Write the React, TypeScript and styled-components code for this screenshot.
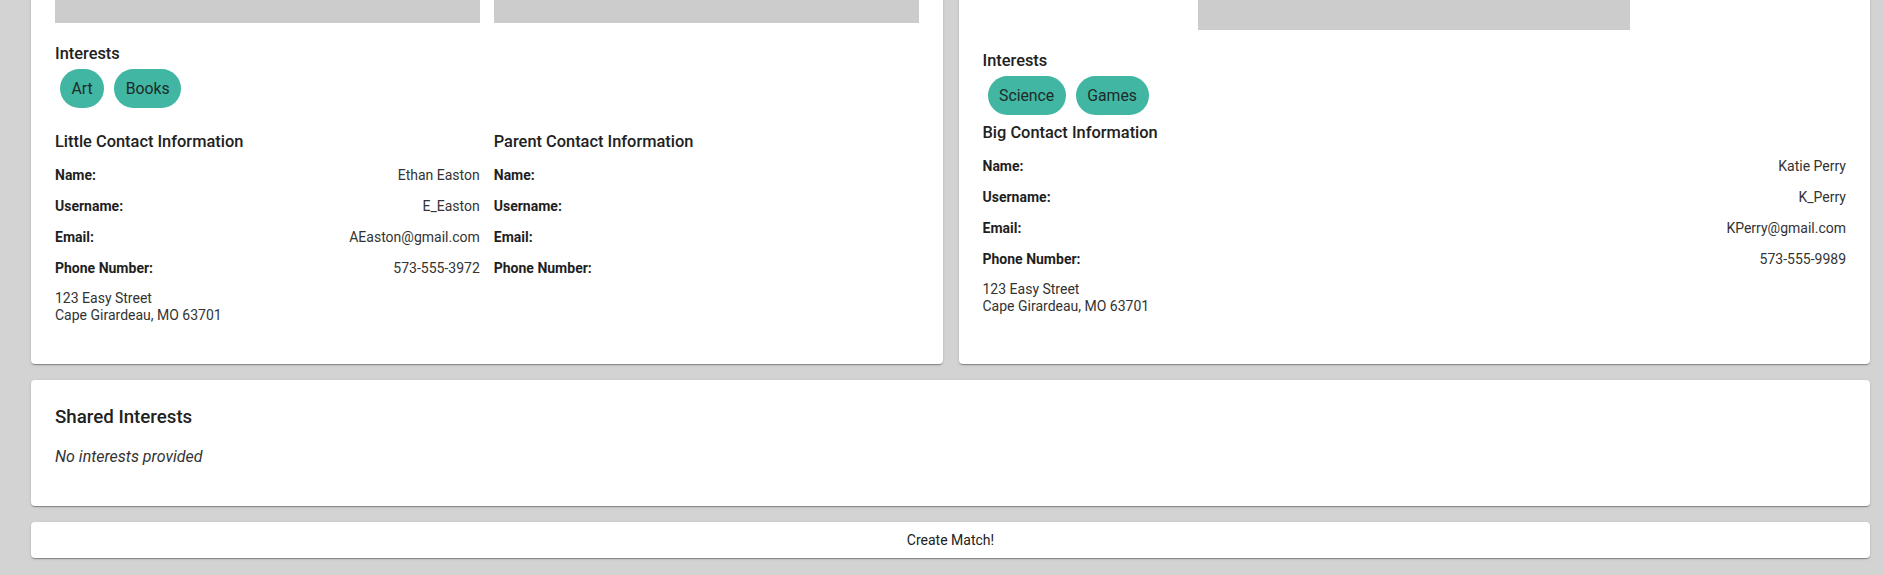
import React from 'react';
import styled, { createGlobalStyle } from 'styled-components';

const GlobalStyle = createGlobalStyle`
  html, body {
    margin: 0;
    padding: 0;
    background: #d3d3d3;
    font-family: Roboto, "Liberation Sans", Arial, sans-serif;
    color: #212121;
  }
  body {
    overflow: hidden;
  }
`;

const Page = styled.div`
  display: flex;
  flex-direction: column;
  gap: 16px;
  margin-top: -200px;
  padding: 0 14px 19px 31px;
`;

const CardRow = styled.div`
  display: grid;
  grid-template-columns: 1fr 1fr;
  gap: 16px;
  align-items: stretch;
`;

const Card = styled.div`
  background: #fff;
  border-radius: 4px;
  box-shadow: 0 2px 1px -1px rgba(0, 0, 0, 0.2), 0 1px 1px 0 rgba(0, 0, 0, 0.14),
    0 1px 3px 0 rgba(0, 0, 0, 0.12);
  padding: 24px;
`;

const TwoCols = styled.div<{ $top?: number }>`
  display: grid;
  grid-template-columns: 1fr 1fr;
  gap: 14px;
  margin-top: ${p => p.$top || 0}px;
`;

const Photo = styled.div<{ $height: number; $width?: number }>`
  background: #cccccc;
  height: ${p => p.$height}px;
  width: ${p => (p.$width ? `${p.$width}px` : '100%')};
  margin: 0 auto;
`;

const Label = styled.div`
  margin-top: 21px;
  font-size: 16.4px;
  font-weight: 500;
  line-height: 20px;
`;

const ChipRow = styled.div`
  display: flex;
  margin-top: 5px;
`;

const Chip = styled.button`
  height: 39px;
  margin: 0 5px;
  padding: 0 11.5px;
  border: none;
  border-radius: 20px;
  background: #41b6a3;
  color: #1d2b29;
  font-family: Roboto, "Liberation Sans", Arial, sans-serif;
  font-size: 15.8px;
`;

const Heading = styled.div<{ $top?: number }>`
  margin-top: ${p => (p.$top || 0) + 1}px;
  font-size: 16.4px;
  font-weight: 500;
  line-height: 22px;
`;

const Rows = styled.div`
  display: flex;
  flex-direction: column;
  gap: 11px;
  margin-top: 12px;
`;

const Row = styled.div`
  display: flex;
  justify-content: space-between;
  font-size: 14px;
  line-height: 20px;
`;

const RowLabel = styled.span`
  font-weight: 700;
  color: #1f1f1f;
`;

const RowValue = styled.span`
  color: #333;
`;

const Address = styled.div`
  margin: 12px 0 16px;
  font-size: 14px;
  line-height: 17px;
  color: #333;
`;

const SharedTitle = styled.div`
  margin-top: 2px;
  font-size: 18.7px;
  font-weight: 500;
  line-height: 22px;
`;

const Empty = styled.div`
  margin: 19px 0 15px;
  font-size: 16px;
  font-style: italic;
  line-height: 20px;
  color: #333;
`;

const MatchButton = styled.button`
  height: 36px;
  width: 100%;
  border: none;
  border-radius: 4px;
  background: #fff;
  box-shadow: 0 2px 1px -1px rgba(0, 0, 0, 0.2), 0 1px 1px 0 rgba(0, 0, 0, 0.14),
    0 1px 3px 0 rgba(0, 0, 0, 0.12);
  font-family: Roboto, "Liberation Sans", Arial, sans-serif;
  font-size: 14px;
  font-weight: 400;
  color: #212121;
`;

interface Contact {
  name?: string;
  username?: string;
  email?: string;
  phone?: string;
  address?: string[];
}

const ContactBlock: React.FC<{ title: string; contact: Contact; top?: number }> = ({
  title,
  contact,
  top
}) => (
  <div>
    <Heading $top={top}>{title}</Heading>
    <Rows>
      <Row>
        <RowLabel>Name:</RowLabel>
        <RowValue>{contact.name}</RowValue>
      </Row>
      <Row>
        <RowLabel>Username:</RowLabel>
        <RowValue>{contact.username}</RowValue>
      </Row>
      <Row>
        <RowLabel>Email:</RowLabel>
        <RowValue>{contact.email}</RowValue>
      </Row>
      <Row>
        <RowLabel>Phone Number:</RowLabel>
        <RowValue>{contact.phone}</RowValue>
      </Row>
    </Rows>
    {contact.address && (
      <Address>
        {contact.address.map(line => (
          <div key={line}>{line}</div>
        ))}
      </Address>
    )}
  </div>
);

const Interests: React.FC<{ items: string[] }> = ({ items }) => (
  <>
    <Label>Interests</Label>
    <ChipRow>
      {items.map(item => (
        <Chip key={item}>{item}</Chip>
      ))}
    </ChipRow>
  </>
);

const address = ['123 Easy Street', 'Cape Girardeau, MO 63701'];

export default function App() {
  return (
    <>
      <GlobalStyle />
      <Page>
        <CardRow>
          <Card>
            <TwoCols>
              <Photo $height={199} />
              <Photo $height={199} />
            </TwoCols>
            <Interests items={['Art', 'Books']} />
            <TwoCols $top={22}>
              <ContactBlock
                title="Little Contact Information"
                contact={{
                  name: 'Ethan Easton',
                  username: 'E_Easton',
                  email: 'AEaston@gmail.com',
                  phone: '573-555-3972',
                  address
                }}
              />
              <ContactBlock title="Parent Contact Information" contact={{}} />
            </TwoCols>
          </Card>
          <Card>
            <Photo $height={206} $width={432} />
            <Interests items={['Science', 'Games']} />
            <ContactBlock
              top={6}
              title="Big Contact Information"
              contact={{
                name: 'Katie Perry',
                username: 'K_Perry',
                email: 'KPerry@gmail.com',
                phone: '573-555-9989',
                address
              }}
            />
          </Card>
        </CardRow>
        <Card>
          <SharedTitle>Shared Interests</SharedTitle>
          <Empty>No interests provided</Empty>
        </Card>
        <MatchButton>Create Match!</MatchButton>
      </Page>
    </>
  );
}
